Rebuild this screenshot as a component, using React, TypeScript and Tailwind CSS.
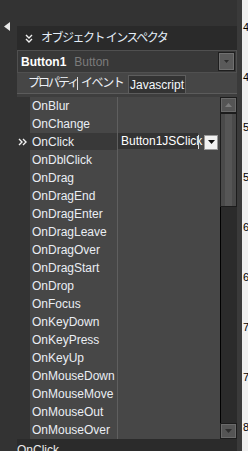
const events = [
  "OnBlur",
  "OnChange",
  "OnClick",
  "OnDblClick",
  "OnDrag",
  "OnDragEnd",
  "OnDragEnter",
  "OnDragLeave",
  "OnDragOver",
  "OnDragStart",
  "OnDrop",
  "OnFocus",
  "OnKeyDown",
  "OnKeyPress",
  "OnKeyUp",
  "OnMouseDown",
  "OnMouseMove",
  "OnMouseOut",
  "OnMouseOver",
];

const ruler = [40, 45, 50, 55, 60, 65, 70, 75, 80];

function EventRow({ name, active }: { name: string; active: boolean }) {
  return (
    <div className="flex h-[18px] shrink-0">
      <div className="flex w-[13px] items-center bg-[#333] pl-[1px]">
        {active && (
          <svg width="9" height="8" viewBox="0 0 9 8">
            <path
              d="M1 1L4 4L1 7M5 1L8 4L5 7"
              fill="none"
              stroke="#f2f2f2"
              strokeWidth="1.4"
            />
          </svg>
        )}
      </div>
      <div className="w-[87px] bg-[#474747]">
        <div
          className={`h-[17px] pl-[2px] leading-[18px] text-[#eaeef4] ${
            active ? "bg-[#393939]" : ""
          }`}
        >
          {name}
        </div>
      </div>
      <div className="w-px bg-[#5f5f5f]" />
      <div className="flex flex-1 items-start bg-[#474747]">
        {active && (
          <div className="flex h-[16px] items-center">
            <div className="flex h-[16px] w-[80px] items-center bg-[#333] pl-[3px] text-white">
              Button1JSClick
            </div>
            <div className="mt-px h-[14px] w-px bg-[#dcdcdc]" />
            <div className="ml-[5px] mt-[2px] flex h-[15px] w-[14px] items-center justify-center border border-[#9a9a9a] bg-[#f2f2f2]">
              <svg width="7" height="4" viewBox="0 0 7 4">
                <path d="M0 0H7L3.5 4Z" fill="#111" />
              </svg>
            </div>
          </div>
        )}
      </div>
    </div>
  );
}

function ScrollButton({ up }: { up: boolean }) {
  return (
    <div className="flex h-[16px] items-center justify-center border border-[#1c1c1c] bg-[#555]">
      <div className="flex h-full w-full items-center justify-center border border-[#6a6a6a]">
        <svg width="7" height="4" viewBox="0 0 7 4">
          <path
            d={up ? "M0 4H7L3.5 0Z" : "M0 0H7L3.5 4Z"}
            fill={up ? "#7c7c7c" : "#2e2e2e"}
          />
        </svg>
      </div>
    </div>
  );
}

export default function App() {
  return (
    <div className="flex h-[451px] w-[248px] overflow-hidden bg-[#333] font-['Liberation_Sans','Noto_Sans_CJK_JP',sans-serif] text-[12px] text-[#ececec]">
      <div className="w-[17px] shrink-0 pl-[4px] pt-[22px]">
        <svg width="6" height="9" viewBox="0 0 6 9">
          <path d="M6 0V9L0 4.5Z" fill="#e8e8e8" />
        </svg>
      </div>

      <div className="flex w-[220px] shrink-0 flex-col">
        <div className="h-[26px] shrink-0" />

        <div className="flex h-[24px] shrink-0 items-center bg-[#2a2a2a] pl-[8px]">
          <svg width="8" height="9" viewBox="0 0 8 9">
            <path
              d="M1 1L4 4L7 1M1 5L4 8L7 5"
              fill="none"
              stroke="#f0f0f0"
              strokeWidth="1.4"
            />
          </svg>
          <span className="ml-[8px] whitespace-nowrap text-[12px] tracking-[-1.5px] text-[#e4eef8]">
            オブジェクト インスペクタ
          </span>
        </div>

        <div className="flex h-[23px] shrink-0 items-center border border-[#505050] bg-[#383838] pl-[3px] pr-px">
          <span className="font-bold text-white">Button1</span>
          <span className="ml-[8px] text-[#7b7b7b]">Button</span>
          <div className="ml-auto flex h-[19px] w-[17px] border border-[#1e1e1e] bg-[#5a5a5a]">
            <div className="flex h-full w-full items-center justify-center border border-[#707070]">
              <svg width="5" height="3" viewBox="0 0 5 3">
                <path d="M0 0H5L2.5 3Z" fill="#2c2c2c" />
              </svg>
            </div>
          </div>
        </div>

        <div className="flex h-[20px] shrink-0 items-end bg-[#464646] pl-[11px]">
          <span className="flex h-full w-[49px] items-center whitespace-nowrap text-[12px] tracking-[-2px] text-[#eef2f8]">
            プロパティ
          </span>
          <span className="mb-[3px] h-[13px] w-px bg-[#dcdcdc]" />
          <span className="ml-[3px] flex h-full w-[44px] items-center whitespace-nowrap text-[12px] tracking-[-1.4px] text-[#eef2f8]">
            イベント
          </span>
          <span className="ml-[3px] flex h-[18px] w-[58px] items-center justify-center border border-b-0 border-[#5e5e5e] bg-[#333] text-[12px] text-[#f4f8fc]">
            Javascript
          </span>
        </div>
        <div className="h-px shrink-0 bg-[#5c5c5c]" />
        <div className="h-[3px] shrink-0 bg-[#3e3e3e]" />

        <div className="flex h-[342px] shrink-0">
          <div className="flex w-[203px] flex-col overflow-hidden">
            {events.map((name, i) => (
              <EventRow key={name} name={name} active={i === 2} />
            ))}
          </div>
          <div className="flex w-[17px] flex-col">
            <ScrollButton up />
            <div className="flex h-[94px] justify-center border border-[#1c1c1c] bg-[#4a4a4a]">
              <div className="w-[7px] bg-[#565656]" />
            </div>
            <div className="flex-1 border-l border-black bg-[#2b2b2b]" />
            <ScrollButton up={false} />
          </div>
        </div>

        <div className="h-[12px] shrink-0 overflow-hidden bg-[#2b2b2b] pt-[4px] leading-[14px] text-[#ececec]">
          OnClick
        </div>
      </div>

      <div className="w-[5px] shrink-0 bg-[#3a3a3a]" />
      <div className="w-[6px] shrink-0 overflow-hidden bg-[#f0f0f0] pl-px pt-[2px]">
        {ruler.map((n) => (
          <div key={n} className="h-[50px] text-[11px] leading-[50px] text-black">
            {n}
          </div>
        ))}
      </div>
    </div>
  );
}
